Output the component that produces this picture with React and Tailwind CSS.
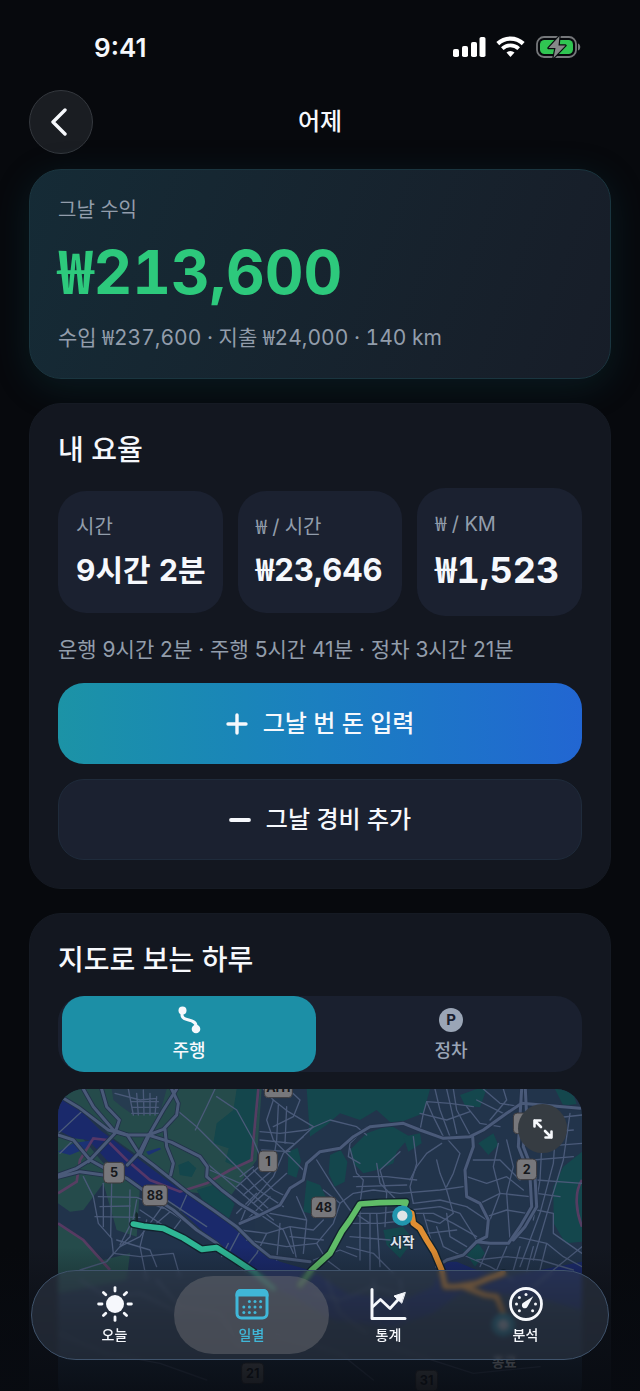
const stats = [
  { label: '시간', value: '9시간 2분', size: 'text-[30px] leading-[46px]' },
  { label: '₩ / 시간', value: '₩23,646', size: 'text-[31px] leading-[46px]' },
  { label: '₩ / KM', value: '₩1,523', size: 'text-[36px] leading-[52px]' },
];

const navItems = [
  { label: '오늘', icon: SunIcon },
  { label: '일별', icon: CalendarIcon, active: true },
  { label: '통계', icon: ChartIcon },
  { label: '분석', icon: GaugeIcon },
];

// Sets the narrow won sign of the Korean face in front of Inter digits
function Money({ children }) {
  return children.split(/(₩)/).map((part, i) =>
    part === '₩' ? (
      <span key={i} className="font-['Noto_Sans_CJK_KR',sans-serif] leading-none">₩</span>
    ) : (
      part
    )
  );
}

function SunIcon() {
  return (
    <svg width="38" height="38" viewBox="0 0 38 38" aria-hidden="true">
      <circle cx="19" cy="19" r="9" fill="currentColor" />
      <g stroke="currentColor" strokeWidth="2.8" strokeLinecap="round">
        {[0, 45, 90, 135, 180, 225, 270, 315].map((a) => (
          <path key={a} d="M19 2.600v3.400" transform={`rotate(${a} 19 19)`} />
        ))}
      </g>
    </svg>
  );
}

function CalendarIcon() {
  const dots = [[18.8, 15.5], [24.4, 15.5], [30, 15.5], [13.2, 21], [18.8, 21], [24.4, 21], [30, 21], [13.2, 26.5], [18.8, 26.5], [24.4, 26.5]];
  return (
    <svg width="38" height="38" viewBox="0 0 38 38" aria-hidden="true">
      <rect x="4" y="5.500" width="30" height="27.500" rx="4.500" fill="none" stroke="currentColor" strokeWidth="3" />
      <path d="M2.500 11.500V9a5 5 0 0 1 5-5h23a5 5 0 0 1 5 5v2.500z" fill="currentColor" />
      {dots.map(([x, y]) => (
        <circle key={`${x}-${y}`} cx={x - 2.4} cy={y + 1} r="1.500" fill="currentColor" />
      ))}
    </svg>
  );
}

function ChartIcon() {
  return (
    <svg width="38" height="38" viewBox="0 0 38 38" fill="none" stroke="currentColor" strokeLinecap="round" strokeLinejoin="round" aria-hidden="true">
      <path d="M2 4.500v29h33" strokeWidth="3" />
      <path d="M3 21.500l7.500-7 9.500 9L30.500 12" strokeWidth="2.800" />
      <path d="M35 7.500l-11 3.500 7.500 7z" fill="currentColor" strokeWidth="1" />
    </svg>
  );
}

function GaugeIcon() {
  const dots = [[9.5, 19], [12.4, 12.4], [19, 9.6], [28.5, 19], [12.4, 25.8], [25.6, 25.8]];
  return (
    <svg width="38" height="38" viewBox="0 0 38 38" aria-hidden="true">
      <circle cx="19" cy="19" r="15.500" fill="none" stroke="currentColor" strokeWidth="2.800" />
      {dots.map(([x, y]) => (
        <circle key={`${x}-${y}`} cx={x} cy={y} r="1.500" fill="currentColor" />
      ))}
      <path d="M26.300 11.300L16.700 17.600a3 3 0 1 0 3.900 4z" fill="currentColor" />
    </svg>
  );
}

function StatusBar() {
  return (
    <div className="flex h-[94px] items-center justify-between pr-[59px] pl-[94px]">
      <span className="text-[26px] font-semibold">9:41</span>
      <div className="flex items-center gap-[10px]">
        <svg width="33" height="22" viewBox="0 0 33 22" fill="#fff" aria-hidden="true">
          <rect x="0" y="13" width="6" height="8" rx="1.800" />
          <rect x="9" y="10" width="6" height="11" rx="1.800" />
          <rect x="18" y="6" width="6" height="15" rx="1.800" />
          <rect x="26.500" y="1" width="6" height="20" rx="1.800" />
        </svg>
        <svg width="29" height="22" viewBox="0 0 29 22" fill="none" stroke="#fff" aria-hidden="true">
          <path d="M1.800 7.600a18.500 18.500 0 0 1 25.400 0" strokeWidth="4.200" />
          <path d="M6.300 12.600a12 12 0 0 1 16.400 0" strokeWidth="3.800" />
          <path d="M14.500 21l-4-4.400a6 6 0 0 1 8 0z" fill="#fff" stroke="none" />
        </svg>
        <svg width="46" height="24" viewBox="0 0 46 24" aria-hidden="true">
          <rect x="2" y="2" width="39" height="20" rx="7" fill="none" stroke="#75777a" strokeWidth="1.800" />
          <path d="M43 8.500c3 1 3 6 0 7z" fill="#75777a" />
          <rect x="5" y="5" width="33" height="14" rx="4.500" fill="#30c552" />
          <path d="M24.500 1L13.500 13h7l-2 10L30.500 10.500h-7z" fill="#858888" stroke="#090b0f" strokeWidth="2.400" strokeLinejoin="round" paintOrder="stroke" />
        </svg>
      </div>
    </div>
  );
}

const forest = [
  'M590 27L660 27L650 120L640 230L590 262L556 245L566 205L520 190L530 130L580 90z',
  'M800 27H1170L1150 100L1060 135L1010 90L960 120L900 100L860 135L810 170z',
  'M930 210L980 160L1050 135L1110 170L1070 215L1060 250L1010 270L970 280L940 250z',
  'M745 215l28 -12l10 40l-14 50l-26 -10z',
  'M870 225l32 -15l20 35l-8 60l-30 15l-18 -40z',
  'M470 330l58 -18l56 60l-18 45l-66 -35z',
  'M415 255l30 -12l24 22l-14 26l-36 -6z',
  'M1090 170l50 -10l5 30l-40 25z',
  'M1315 190l45 -30l15 35l-30 30z',
  'M1260 45l50 -18h30l-20 55l-45 -5z',
  'M1540 320l30 -60l56 -45v270l-50 5l-35 -60z',
  'M800 300l40 15l30 60l-40 30l-40 -10z',
  'M1030 450l60 -10l30 40l-40 55l-40 -40z',
  'M1270 510l45 -20l20 30l-30 40z',
  'M1545 27h50l15 45l-40 5z',
];

const majorRoads = [
  'M54 45L120 85L205 150L260 165L325 165L395 187L480 230L502 260L500 290L545 330L600 372L655 405',
  'M54 165L100 180L150 240L195 265L260 295L330 345L400 390L470 450L530 490L580 540L620 575',
  'M145 245L225 160L238 120L200 80L185 27',
  'M130 27L160 80L220 150L262 165L300 225L340 255L440 335L520 390L590 440L640 490L690 530L810 545',
  'M300 225L330 160L370 90L410 27',
  'M262 255L300 215L325 165L370 148L410 105L415 70L395 27',
  'M54 285L110 265L150 240M54 292L120 275L190 285',
  'M600 430L660 405L720 375L750 325L790 300L800 250L840 215L900 205L940 170L990 140L1090 130L1140 150L1210 175L1290 170L1330 150L1400 100L1445 70L1620 85',
  'M1445 27L1440 110L1435 200L1470 290L1475 380L1440 440L1405 490L1350 490L1310 485L1270 525L1220 540L1190 560',
  'M1298 170L1300 200L1275 270L1280 350L1320 370L1345 420L1340 470L1310 485',
  'M1456 27L1460 110L1450 200L1485 290L1490 380L1455 440L1420 480',
  'M375 148L380 200L400 250L392 285',
];

const minorRoads = [
  'M410 90L470 140L530 200L600 270L655 330L730 380', 'M525 27L500 80L466 150', 'M530 50L590 90L640 180L665 240',
  'M500 250L560 300L640 370L700 420', 'M510 270L600 310L690 390', 'M130 290L160 350L175 430L215 475L220 520L200 545L120 570',
  'M175 350L290 352L370 385', 'M180 380L270 378', 'M165 410L300 412', 'M215 310L212 470', 'M190 310L190 440', 'M270 330L268 440L240 495', 'M290 360L270 470L240 500',
  'M370 375L330 430L300 470L240 500L200 545', 'M390 395L350 430', 'M430 410L400 450', 'M320 350L460 440', 'M350 340L500 440', 'M300 390L420 470',
  'M265 27L280 105M290 40L295 105M310 30L312 105M330 40L330 105M350 50L345 105M275 65L355 65M275 82L355 82M275 100L360 100M225 40L300 60L350 55',
  'M565 490L545 530M600 455L560 530M650 520L610 570M440 345L420 390M55 160L130 90M100 180L60 220', 'M230 480L330 510L350 560M320 420L300 500L320 600M220 520L300 530L400 520L420 590',
  'M670 27L700 60L745 95L820 140L740 215', 'M700 60L680 120L700 180L740 220L790 270', 'M745 27L780 60L760 110L700 140', 'M660 155L720 160L800 150L870 120L950 140L980 165',
  'M715 75L710 180L700 240M740 80L735 190M660 180L760 190M665 210L750 215M790 170L730 220L700 290L620 380L600 430', 'M640 270L700 330L740 350M600 290L640 260M590 320L680 240M610 345L710 260M640 370L740 280',
  'M590 400L650 340M620 420L690 350M655 400L730 450L760 520M600 450L680 460L750 440L820 450L850 420', 'M680 460L650 520M720 430L710 540M750 440L770 540M620 480L740 500L830 490M690 400L800 420M770 350L800 420L790 520M750 470L850 480',
  'M830 240L880 320L930 390L990 430', 'M930 205L950 280L970 300L960 370', 'M1010 250L1020 310L1060 350L1100 390', 'M940 290L1040 290L1130 300', 'M950 320L1100 315', 'M900 370L940 340L1000 330L1080 340L1200 330L1270 320',
  'M1080 215L1020 270L1040 340L1035 440', 'M980 140L930 190L925 230L960 250', 'M1120 170L1130 250L1110 320L1120 370', 'M1190 240L1200 280L1220 330L1240 400L1200 430L1160 420', 'M1205 190L1160 220L1130 260L1110 300',
  'M1220 175L1260 220L1240 280L1220 320', 'M1160 65L1180 110L1210 170M1185 27L1200 90L1230 170M1220 27L1230 70L1250 160M1240 27L1250 90L1290 165', 'M1140 150L1150 100L1160 65L1230 70L1300 80M1140 100L1220 120L1290 95',
  'M1280 80L1320 130L1380 140M1310 60L1390 100M1330 27L1380 70L1440 80M1350 120L1400 60L1390 27', 'M1300 240L1380 240L1440 300M1280 290L1340 310L1400 290L1450 330', 'M1320 370L1380 340L1470 350M1340 410L1400 390L1460 400',
  'M1375 190L1360 260L1380 340L1350 420M1400 180L1420 260L1400 340L1410 480', 'M1120 370L1200 360L1280 380L1340 420M1110 390L1200 380L1260 400L1310 480', 'M1090 400L1180 400L1240 430L1310 470M1110 420L1160 460L1250 450', 'M1190 440L1210 500L1260 525M1220 400L1230 470L1280 500M1150 400L1170 470L1190 540',
  'M960 370L960 540M990 400L990 570M930 430L1020 430L1110 420M930 470L1050 480M940 400L1020 400L1100 390M920 500L1000 520L1060 580M1010 400L1020 560', 'M850 330L900 370L880 430L830 490L860 540L900 570M820 540L900 510L950 530',
  'M1490 120L1626 105M1490 160L1600 150M1500 200L1626 190M1480 240L1600 230M1490 300L1626 310M1490 340L1560 350', 'M1510 110L1500 300L1480 420M1550 110L1540 250L1500 400L1440 560M1590 100L1570 240L1530 370L1480 540', 'M1490 390L1540 400L1540 460L1626 520M1430 470L1520 490L1570 530L1626 560M1400 500L1370 570M1440 500L1420 570M1480 500L1460 575M1350 490L1320 560M1520 490L1500 570M1626 500L1540 570L1480 620',
  'M1310 540L1400 530L1500 540L1600 570M1270 525L1350 560L1420 600', 'M120 600L200 650L300 640L420 700M350 600L420 680L540 700L600 800M820 640L900 660L1000 620L1100 650M860 600L900 700L980 760M1000 600L1010 720M1080 600L1100 720', 'M54 760L200 820L360 850L500 900M700 760L900 820L1000 900M1050 800L1300 880L1500 860',
];

function Badge({ x, y, w, children }) {
  return (
    <g>
      <rect x={x - w / 2} y={y - 31} width={w} height="62" rx="12" fill="#77777b" stroke="#3c3a3d" strokeWidth="3" />
      <text x={x} y={y + 13} textAnchor="middle" fontSize="38" fontWeight="700" fill="#16181c">{children}</text>
    </g>
  );
}

function RouteMap() {
  return (
    <svg viewBox="54 27 1572 960" className="block w-full" role="img" aria-label="주행 경로 지도">
      <rect x="54" y="27" width="1572" height="960" fill="#22344b" />
      <path d="M54 27H665L650 240L570 350L440 335L340 260L220 175L130 90L54 60z" fill="#264c4c" />
      <path d="M54 170L120 165L190 250L300 320L290 470L230 450L190 310L130 390L90 395L54 370z" fill="#264c4c" />
      <path d="M54 435L130 480L190 540L270 520L260 600L54 640z" fill="#264c4c" />
      <path d="M215 27H380L360 100L280 105L245 80L220 60z" fill="#273d50" />
      {forest.map((d) => (
        <path key={d} d={d} fill="#14474d" />
      ))}
      <path d="M54 52L105 75L180 150L300 240L400 315L560 425L650 505L720 545L815 572L920 640L1090 660L1180 620L1210 545L1250 545L1310 570L1400 590L1626 545V690L1480 650L1360 640L1260 640L1180 700L1060 740L880 720L760 650L640 600L560 525L500 465L400 370L260 300L200 240L145 180L100 175L54 150z" fill="#1b2a6c" />
      <path d="M54 215L100 190L160 180L140 205L90 225zM318 215l40 -12l6 4l-38 18z" fill="#1c3275" />
      <g fill="none" stroke="#653b68" strokeWidth="8" opacity="0.8">
        <path d="M54 340L110 305L120 240L160 175L200 180L260 240L330 300L420 335L500 310L570 270L635 240L645 130L655 27" />
        <path d="M54 430L130 480L210 570" />
        <path d="M1626 300C1600 340 1610 400 1626 440" />
      </g>
      <g fill="none" strokeLinejoin="round" strokeLinecap="round">
        {minorRoads.map((d) => (
          <path key={d} d={d} stroke="#4a5a79" strokeWidth="4" />
        ))}
        {majorRoads.map((d) => (
          <path key={d} d={d} stroke="#22324a" strokeWidth="14" />
        ))}
        {majorRoads.map((d) => (
          <path key={d} d={d} stroke="#4a5a79" strokeWidth="9" />
        ))}
      </g>
      <g fontFamily="Inter, sans-serif">
        <Badge x={715} y={22} w={84}>AH1</Badge>
        <Badge x={222} y={278} w={62}>5</Badge>
        <Badge x={345} y={346} w={74}>88</Badge>
        <Badge x={684} y={244} w={56}>1</Badge>
        <Badge x={851} y={382} w={74}>48</Badge>
        <Badge x={1450} y={130} w={60} />
        <Badge x={1460} y={268} w={60}>2</Badge>
        <Badge x={638} y={880} w={66}>21</Badge>
        <Badge x={1160} y={902} w={66}>31</Badge>
      </g>
      <path d="M286 425V402L290 395L294 402V425z" fill="#16262c" />
      {[
        ['M280 432L310 438L370 445L430 474L485 508L530 503L580 535L640 575L700 625', '#2fb795'],
        ['M780 615L815 570L870 520L905 455L930 420L960 372L1020 368L1098 366L1090 385', '#60bd68'],
        ['M1105 395L1115 400L1120 430L1140 445L1160 480L1182 515L1205 570L1215 620L1250 620L1310 610L1345 595L1390 580M1270 620L1335 645L1370 650L1390 700', '#df8d32'],
      ].map(([d, color]) => (
        <g key={d} fill="none" strokeLinejoin="round" strokeLinecap="round">
          <path d={d} stroke="#11222d" strokeWidth="25" />
          <path d={d} stroke={color} strokeWidth="17" />
        </g>
      ))}
      <circle cx="1087" cy="407" r="23" fill="#dfe4e6" stroke="#2196ae" strokeWidth="15" />
      <circle cx="1390" cy="735" r="26" fill="#dfe4e6" stroke="#2196ae" strokeWidth="18" />
      <g fontFamily="Inter, 'Noto Sans CJK KR', sans-serif" fontSize="40" fontWeight="700" fill="#dfe5ec" stroke="#1c2c3c" strokeWidth="6" paintOrder="stroke" textAnchor="middle">
        <text x="1087" y="502">시작</text>
        <text x="1393" y="862">종료</text>
      </g>
    </svg>
  );
}

function Card({ title, children }) {
  return (
    <section className="rounded-[32px] border border-[#151a23] bg-[#131720] p-7">
      <h2 className="text-[28px] leading-9 font-medium">{title}</h2>
      {children}
    </section>
  );
}

export default function App() {
  return (
    <div className="relative h-screen overflow-hidden bg-[#07090d] font-['Inter','Noto_Sans_CJK_KR',sans-serif] text-[#f6f8fc]">
      <StatusBar />

      <header className="-mt-1 grid h-16 grid-cols-[64px_1fr_64px] items-center px-[29px]">
        <button aria-label="뒤로" className="flex size-16 items-center justify-center rounded-full border border-[#34383e] bg-[#1a1d22]">
          <svg width="20" height="30" viewBox="0 0 20 30" fill="none" stroke="currentColor" strokeWidth="3.400" strokeLinecap="round" strokeLinejoin="round" aria-hidden="true">
            <path d="M14 3L2 15l12 12" />
          </svg>
        </button>
        <h1 className="text-center text-2xl font-medium">어제</h1>
      </header>

      <main className="mt-[15px] flex flex-col gap-6 px-[29px]">
        <section className="rounded-[32px] border border-[#1a353f] bg-linear-110 from-[#152b36] to-[#171d28] px-7 py-6 tabular-nums shadow-[0_8px_36px_rgba(20,90,105,0.22)]">
          <p className="text-xl leading-8 text-[#929dab]">그날 수익</p>
          <p className="mt-2 text-[60px] leading-[76px] font-bold text-[#2dc97c]"><Money>₩213,600</Money></p>
          <p className="mt-3 text-[21px] leading-8 text-[#929dab]"><Money>수입 ₩237,600 · 지출 ₩24,000 · 140 km</Money></p>
        </section>

        <Card title="내 요율">
          <dl className="mt-5 grid grid-cols-3 items-center gap-[15px] tabular-nums">
            {stats.map((stat) => (
              <div key={stat.label} className="rounded-[28px] bg-[#1b2130] px-[18px] py-5">
                <dt className="text-xl leading-8 text-[#929dab]"><Money>{stat.label}</Money></dt>
                <dd className={`${stat.size} mt-1 font-bold whitespace-nowrap`}><Money>{stat.value}</Money></dd>
              </div>
            ))}
          </dl>
          <p className="mt-[18px] text-[21px] leading-8 text-[#929dab]">운행 9시간 2분 · 주행 5시간 41분 · 정차 3시간 21분</p>
          <div className="mt-[17px] flex flex-col gap-[15px]">
            <button className="flex h-[81px] items-center justify-center gap-[15px] rounded-[26px] bg-linear-to-r from-[#1c93a6] via-[#1b7fc0] to-[#2266d2] text-2xl font-medium">
              <svg width="22" height="22" viewBox="0 0 22 22" stroke="currentColor" strokeWidth="3.400" strokeLinecap="round" aria-hidden="true">
                <path d="M11 2v18M2 11h18" />
              </svg>
              그날 번 돈 입력
            </button>
            <button className="flex h-[81px] items-center justify-center gap-[15px] rounded-[26px] border border-[#1f2b3b] bg-[#1b2130] text-2xl font-medium">
              <svg width="22" height="22" viewBox="0 0 22 22" stroke="currentColor" strokeWidth="3.800" strokeLinecap="round" aria-hidden="true">
                <path d="M2 11h18" />
              </svg>
              그날 경비 추가
            </button>
          </div>
        </Card>

        <Card title="지도로 보는 하루">
          <div className="mt-[18px] grid grid-cols-2 rounded-[26px] bg-[#1a202f]" role="tablist">
            <button role="tab" aria-selected="true" className="mx-1 flex h-[76px] flex-col items-center justify-center rounded-[22px] bg-[#1c8fa6] text-lg leading-6 font-medium">
              <svg width="26" height="30" viewBox="0 0 26 30" fill="none" stroke="currentColor" strokeWidth="3" strokeLinecap="round" aria-hidden="true">
                <path d="M6 6v4c0 7 14 3 14 11v3" />
                <circle cx="6.500" cy="5.500" r="4" fill="currentColor" stroke="none" />
                <circle cx="20" cy="24" r="4.300" fill="currentColor" stroke="none" />
              </svg>
              <span className="mt-1">주행</span>
            </button>
            <button role="tab" aria-selected="false" className="mx-1 flex h-[76px] flex-col items-center justify-center text-lg leading-6 font-medium text-[#9aa5b6]">
              <span className="my-[3px] flex size-6 items-center justify-center rounded-full bg-[#9aa5b6] text-[15px] font-bold text-[#1a202f]">P</span>
              <span className="mt-1">정차</span>
            </button>
          </div>
          <div className="relative mt-[17px] overflow-hidden rounded-[26px]">
            <RouteMap />
            <button aria-label="지도 확대" className="absolute top-[15px] right-[15px] flex size-[49px] items-center justify-center rounded-full bg-[#363c42]">
              <svg width="22" height="22" viewBox="0 0 22 22" fill="none" stroke="currentColor" strokeWidth="2.600" strokeLinecap="round" strokeLinejoin="round" aria-hidden="true">
                <path d="M9 9L2.500 2.500M2.500 8.500v-6h6M13 13l6.500 6.500M19.500 13.500v6h-6" />
              </svg>
            </button>
          </div>
        </Card>
      </main>

      <div className="pointer-events-none absolute inset-x-0 bottom-0 h-36 bg-linear-to-t from-[#080b11]/90 via-[#080b11]/60 to-transparent" />

      <nav className="absolute inset-x-[31px] bottom-[31px] flex h-[90px] items-center rounded-full border border-[#40536b] bg-[#333d4d]/50 px-[14px] backdrop-blur-[2px]">
        {navItems.map(({ label, icon: Icon, active }) => (
          <a
            key={label}
            href="#"
            aria-current={active ? 'page' : undefined}
            className={`flex h-[78px] flex-1 flex-col items-center justify-center rounded-full text-sm leading-5 font-medium ${
              active ? '-mx-[9px] bg-[#6a6b72]/50 px-[9px] text-[#40b7d8]' : ''
            }`}
          >
            <Icon />
            <span className="mt-[2px]">{label}</span>
          </a>
        ))}
      </nav>
    </div>
  );
}
